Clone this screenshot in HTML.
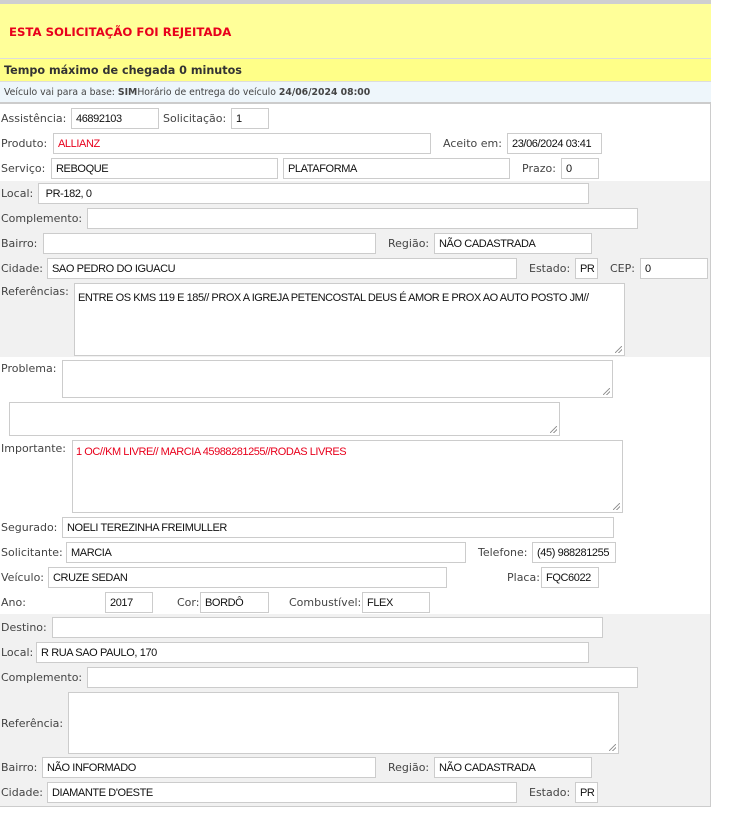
<!DOCTYPE html>
<html><head><meta charset="utf-8"><style>
*{box-sizing:border-box;margin:0;padding:0}
body{width:749px;height:836px;background:#fff;position:relative;font-family:"DejaVu Sans",Verdana,sans-serif;font-size:11px;color:#333;overflow:hidden}
.a{position:absolute}
.l{position:absolute;font-size:11px;color:#444;white-space:nowrap}
.i{position:absolute;height:21px;border:1px solid #ccc;background:#fff;font-family:"Liberation Sans",Arial,sans-serif;font-size:11px;letter-spacing:-0.4px;color:#111;padding:4px 4px 0 4px;white-space:nowrap;overflow:hidden}
.t{position:absolute;border:1px solid #ccc;background:#fff;font-family:"Liberation Sans",Arial,sans-serif;font-size:11px;letter-spacing:-0.45px;color:#111;padding:5px 3px;white-space:nowrap}
.t:after{content:"";position:absolute;right:2px;bottom:2px;width:7px;height:7px;background:linear-gradient(135deg,transparent 45%,#999 45%,#999 55%,transparent 55%,transparent 70%,#999 70%,#999 80%,transparent 80%)}
</style></head><body>
<div class="a" style="left:0;top:0;width:711px;height:4px;background:#cfcfcf"></div>
<div class="a" style="left:0;top:4px;width:711px;height:54px;background:#ffff99"></div>
<div class="a" style="left:9px;top:25px;font-weight:bold;color:#e8001c;font-size:11.7px">ESTA SOLICITAÇÃO FOI REJEITADA</div>
<div class="a" style="left:0;top:58px;width:711px;height:1px;background:#ddd"></div>
<div class="a" style="left:0;top:59px;width:711px;height:23px;background:#ffff88;border-bottom:1px solid #ddd"></div>
<div class="a" style="left:4px;top:64px;font-weight:bold;color:#333;font-size:11.2px">Tempo máximo de chegada 0 minutos</div>
<div class="a" style="left:0;top:82px;width:711px;height:22px;background:#eef6fb;border-bottom:2px solid #ccc"></div>
<div class="a" style="left:4px;top:87px;font-size:9.3px;color:#444">Veículo vai para a base: <b>SIM</b>Horário de entrega do veículo <b>24/06/2024 08:00</b></div>
<div class="a" style="left:710px;top:104px;width:1px;height:703px;background:#ccc"></div>
<div class="a" style="left:0;top:181px;width:710px;height:176px;background:#f1f1f1"></div>
<div class="a" style="left:0;top:614px;width:710px;height:192px;background:#f1f1f1"></div>
<div class="a" style="left:0;top:806px;width:711px;height:1px;background:#ccc"></div>

<div class="l" style="left:1px;top:112px">Assistência:</div><div class="i" style="left:71px;top:108px;width:88px">46892103</div>
<div class="l" style="left:163px;top:112px">Solicitação:</div><div class="i" style="left:231px;top:108px;width:38px">1</div>
<div class="l" style="left:1px;top:137px">Produto:</div><div class="i" style="left:53px;top:133px;width:378px;color:#e8001c">ALLIANZ</div>
<div class="l" style="left:443px;top:137px">Aceito em:</div><div class="i" style="left:507px;top:133px;width:95px">23/06/2024 03:41</div>
<div class="l" style="left:1px;top:162px">Serviço:</div><div class="i" style="left:51px;top:158px;width:227px">REBOQUE</div>
<div class="i" style="left:283px;top:158px;width:227px">PLATAFORMA</div>
<div class="l" style="left:522px;top:162px">Prazo:</div><div class="i" style="left:561px;top:158px;width:38px">0</div>

<div class="l" style="left:1px;top:187px">Local:</div><div class="i" style="left:38px;top:183px;width:551px">&nbsp;PR-182, 0</div>
<div class="l" style="left:1px;top:212px">Complemento:</div><div class="i" style="left:87px;top:208px;width:551px"></div>
<div class="l" style="left:1px;top:237px">Bairro:</div><div class="i" style="left:43px;top:233px;width:333px"></div>
<div class="l" style="left:388px;top:237px">Região:</div><div class="i" style="left:434px;top:233px;width:158px">NÃO CADASTRADA</div>
<div class="l" style="left:1px;top:262px">Cidade:</div><div class="i" style="left:47px;top:258px;width:470px">SAO PEDRO DO IGUACU</div>
<div class="l" style="left:529px;top:262px">Estado:</div><div class="i" style="left:575px;top:258px;width:23px">PR</div>
<div class="l" style="left:610px;top:262px">CEP:</div><div class="i" style="left:640px;top:258px;width:68px">0</div>
<div class="l" style="left:1px;top:285px">Referências:</div><div class="t" style="left:74px;top:283px;width:551px;height:73px;padding-top:8px">ENTRE OS KMS 119 E 185// PROX A IGREJA PETENCOSTAL DEUS É AMOR E PROX AO AUTO POSTO JM//</div>

<div class="l" style="left:1px;top:362px">Problema:</div><div class="t" style="left:62px;top:360px;width:551px;height:38px"></div>
<div class="t" style="left:9px;top:402px;width:551px;height:34px"></div>
<div class="l" style="left:1px;top:442px">Importante:</div><div class="t" style="left:72px;top:440px;width:551px;height:73px;color:#e8001c">1 OC//KM LIVRE// MARCIA 45988281255//RODAS LIVRES</div>
<div class="l" style="left:1px;top:521px">Segurado:</div><div class="i" style="left:62px;top:517px;width:552px">NOELI TEREZINHA FREIMULLER</div>
<div class="l" style="left:1px;top:546px">Solicitante:</div><div class="i" style="left:66px;top:542px;width:400px">MARCIA</div>
<div class="l" style="left:478px;top:546px">Telefone:</div><div class="i" style="left:532px;top:542px;width:84px">(45) 988281255</div>
<div class="l" style="left:1px;top:571px">Veículo:</div><div class="i" style="left:48px;top:567px;width:399px">CRUZE SEDAN</div>
<div class="l" style="left:507px;top:571px">Placa:</div><div class="i" style="left:541px;top:567px;width:58px">FQC6022</div>
<div class="l" style="left:1px;top:596px">Ano:</div><div class="i" style="left:105px;top:592px;width:48px">2017</div>
<div class="l" style="left:177px;top:596px">Cor:</div><div class="i" style="left:200px;top:592px;width:69px">BORDÔ</div>
<div class="l" style="left:289px;top:596px">Combustível:</div><div class="i" style="left:362px;top:592px;width:68px">FLEX</div>

<div class="l" style="left:1px;top:621px">Destino:</div><div class="i" style="left:52px;top:617px;width:551px"></div>
<div class="l" style="left:1px;top:646px">Local:</div><div class="i" style="left:36px;top:642px;width:553px">R RUA SAO PAULO, 170</div>
<div class="l" style="left:1px;top:671px">Complemento:</div><div class="i" style="left:87px;top:667px;width:551px"></div>
<div class="l" style="left:1px;top:717px">Referência:</div><div class="t" style="left:68px;top:692px;width:551px;height:62px"></div>
<div class="l" style="left:1px;top:761px">Bairro:</div><div class="i" style="left:42px;top:757px;width:334px">NÃO INFORMADO</div>
<div class="l" style="left:388px;top:761px">Região:</div><div class="i" style="left:434px;top:757px;width:158px">NÃO CADASTRADA</div>
<div class="l" style="left:1px;top:786px">Cidade:</div><div class="i" style="left:47px;top:782px;width:470px">DIAMANTE D'OESTE</div>
<div class="l" style="left:529px;top:786px">Estado:</div><div class="i" style="left:575px;top:782px;width:23px">PR</div>
</body></html>
